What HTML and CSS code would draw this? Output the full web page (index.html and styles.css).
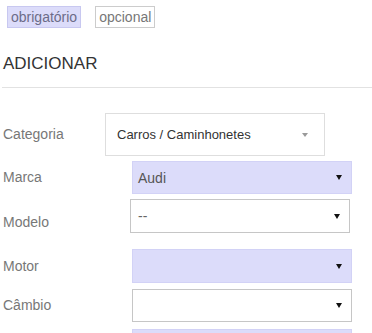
FILE: index.html
```html
<!DOCTYPE html>
<html lang="pt">
<head>
    <meta charset="UTF-8">
    <title>Adicionar</title>
    <link rel="stylesheet" href="styles.css">
</head>
<body>

    <div class="legend">
        <span class="badge badge-required">obrigatório</span>
        <span class="badge badge-optional">opcional</span>
    </div>

    <h2 class="title">ADICIONAR</h2>
    <div class="divider"></div>

    <div class="form">
        <div class="row row-category">
            <label class="field-label">Categoria</label>
            <div class="select select-plain">
                <span>Carros / Caminhonetes</span>
                <svg class="arrow" width="6" height="4" viewBox="0 0 6 4"><polygon points="0,0 6,0 3,4" fill="#9a9a9a"/></svg>
            </div>
        </div>

        <div class="row">
            <label class="field-label">Marca</label>
            <div class="select required">
                <span>Audi</span>
                <svg class="arrow" width="6" height="5" viewBox="0 0 6 5"><polygon points="0,0 6,0 3,5" fill="#111"/></svg>
            </div>
        </div>

        <div class="row row-model">
            <label class="field-label">Modelo</label>
            <div class="select optional tall shift-left">
                <span class="muted">--</span>
                <svg class="arrow" width="6" height="5" viewBox="0 0 6 5"><polygon points="0,0 6,0 3,5" fill="#111"/></svg>
            </div>
        </div>

        <div class="row row-engine">
            <label class="field-label">Motor</label>
            <div class="select required tall">
                <span></span>
                <svg class="arrow" width="6" height="5" viewBox="0 0 6 5"><polygon points="0,0 6,0 3,5" fill="#111"/></svg>
            </div>
        </div>

        <div class="row row-gear">
            <label class="field-label">Câmbio</label>
            <div class="select optional">
                <span></span>
                <svg class="arrow" width="6" height="5" viewBox="0 0 6 5"><polygon points="0,0 6,0 3,5" fill="#111"/></svg>
            </div>
        </div>

        <div class="row">
            <label class="field-label"></label>
            <div class="select required">
                <span></span>
            </div>
        </div>
    </div>

</body>
</html>
```

FILE: styles.css
```css
body {
    margin: 0;
    font-family: 'Liberation Sans', Arial, sans-serif;
    background-color: #fff;
    color: #333;
}

.legend {
    display: flex;
    gap: 14px;
    padding: 6px 0 0 7px;
}

.badge {
    font-size: 14px;
    line-height: 20px;
    padding: 0 3px;
    color: #777;
    border: 1px solid #ccc;
}

.badge-required {
    background-color: #dcdcfa;
    border-color: #c8c8f0;
    color: #6c6c88;
}

.badge-optional {
    background-color: #fff;
}

.title {
    font-size: 17px;
    line-height: 20px;
    font-weight: normal;
    color: #333;
    margin: 26px 0 0 0;
    padding-left: 3px;
}

.divider {
    height: 1px;
    background-color: #e2e2e2;
    margin: 13px 0 0 2px;
}

.form {
    padding: 25px 0 0 3px;
}

.row {
    display: flex;
    align-items: center;
    margin-bottom: 5px;
}

.field-label {
    width: 129px;
    font-size: 14px;
    line-height: 17px;
    color: #777;
}

.row-category .field-label {
    width: 102px;
}

.row-model {
    align-items: flex-start;
    height: 46px;
    margin-bottom: 4px;
}

.row-model .field-label {
    align-self: center;
}

.row-engine {
    margin-bottom: 6px;
}

.row-gear {
    margin-bottom: 7px;
}

.select {
    box-sizing: border-box;
    width: 220px;
    height: 33px;
    display: flex;
    align-items: center;
    justify-content: space-between;
    padding: 0 9px 0 5px;
    font-size: 14px;
    color: #555;
    border: 1px solid #c6c6c6;
}

.select-plain {
    height: 43px;
    font-size: 13px;
    color: #333;
    padding: 0 16px 0 11px;
    border-color: #dedede;
}

.tall {
    height: 34px;
}

.required {
    background-color: #dcdcfa;
    border-color: #d2d2f6;
}

.optional {
    background-color: #fff;
}

.shift-left {
    margin-left: -2px;
}

.muted {
    color: #666;
    padding-left: 2px;
}

.arrow {
    display: block;
    flex-shrink: 0;
}
```
